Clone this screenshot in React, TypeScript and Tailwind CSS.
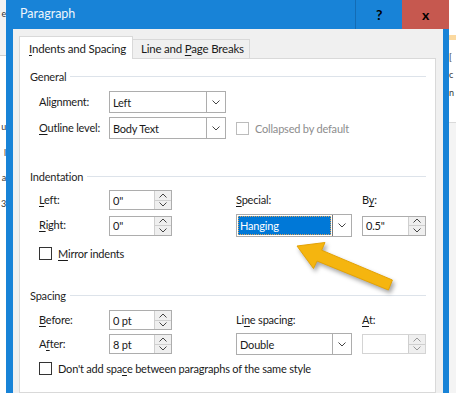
import React from 'react';

const font = "font-['Lato','Liberation_Sans',sans-serif]";

function Chevron({ up = false, className = '' }: { up?: boolean; className?: string }) {
  return (
    <svg width="8" height="5" viewBox="0 0 8 5" className={className}>
      <path
        d={up ? 'M0.5 4.5 L4 1 L7.5 4.5' : 'M0.5 0.5 L4 4 L7.5 0.5'}
        fill="none"
        stroke="#444"
        strokeWidth="1"
      />
    </svg>
  );
}

function Spin({ value, w = 63, disabled = false }: { value: string; w?: number; disabled?: boolean }) {
  return (
    <div
      className={`flex h-[20px] border bg-white ${disabled ? 'border-[#d4d4d4]' : 'border-[#adadad]'}`}
      style={{ width: w }}
    >
      <div className="flex-1 flex items-center pl-[3px] leading-none">{value}</div>
      <div className="w-[17px] flex flex-col border-l border-[#cfcfcf] bg-[#efefef]">
        <div className="flex-1 flex items-center justify-center border-b border-[#cfcfcf]">
          <Chevron up className={disabled ? 'opacity-50' : ''} />
        </div>
        <div className="flex-1 flex items-center justify-center">
          <Chevron className={disabled ? 'opacity-50' : ''} />
        </div>
      </div>
    </div>
  );
}

function Select({ value, w = 116, h = 22, focused = false }: { value: string; w?: number; h?: number; focused?: boolean }) {
  return (
    <div className="flex border border-[#adadad] bg-white" style={{ width: w, height: h }}>
      <div className="flex-1 flex items-center p-[1px]">
        {focused ? (
          <div className="w-full h-full flex items-center pl-[2px] bg-[#0078d7] text-white outline outline-1 outline-dotted outline-[#d9a35a] -outline-offset-1 leading-none">
            {value}
          </div>
        ) : (
          <span className="pl-[2px] leading-none">{value}</span>
        )}
      </div>
      <div
        className={`w-[19px] flex items-center justify-center border-l ${
          focused ? 'border-[#7a7a7a]' : 'border-[#adadad]'
        }`}
      >
        <Chevron />
      </div>
    </div>
  );
}

function Check({ label, disabled = false }: { label: React.ReactNode; disabled?: boolean }) {
  return (
    <div className={`flex items-center h-[13px] ${disabled ? 'text-[#8d8d8d]' : ''}`}>
      <div className={`w-[13px] h-[13px] border bg-white ${disabled ? 'border-[#bcbcbc]' : 'border-[#333]'}`} />
      <span className="ml-[6px] leading-none whitespace-nowrap">{label}</span>
    </div>
  );
}

function GroupHeader({ title, mt }: { title: string; mt: string }) {
  return (
    <div className={`flex items-center h-[16px] ${mt}`}>
      <span className="leading-none text-[#1f1f1f]">{title}</span>
      <div className="flex-1 h-px bg-[#dde3ea] ml-[4px]" />
    </div>
  );
}

const U = ({ children }: { children: React.ReactNode }) => (
  <span className="underline underline-offset-[2px]">{children}</span>
);

export default function App() {
  return (
    <div className={`relative w-[456px] h-[393px] overflow-hidden bg-white flex text-[11px] tracking-[-0.2px] text-[#1a1a1a] ${font}`}>
      {/* page behind, left edge */}
      <div className="w-[6px] flex flex-col overflow-hidden text-[9px] text-[#333]">
        <div className="h-[56px] bg-[#f3f3f3] border-b border-[#d0d0d0] flex justify-end pt-[7px]">
          <span>e</span>
        </div>
        <div className="flex flex-col items-end gap-[12px] pt-[64px]">
          <span>u</span>
          <span>l</span>
          <span>a</span>
          <span>3</span>
        </div>
      </div>

      {/* dialog window */}
      <div className="w-[443px] flex flex-col bg-[#1883d7]">
        <div className="h-[29px] flex items-stretch">
          <div className="flex items-center pl-[14px] text-[#eef5fc] text-[12.5px] tracking-normal">Paragraph</div>
          <div className="ml-auto w-[47px] flex items-center justify-center border-l border-[#136cb5] font-bold text-[14px] text-black">
            ?
          </div>
          <div className="w-[47px] flex items-center justify-center bg-[#c6584f] font-bold text-[14px] text-black">
            x
          </div>
        </div>
        <div className="flex-1 flex">
          <div className="w-[7px]" />
          <div className="w-[430px] bg-[#f0f0f0] pl-[6px] pr-[7px] pt-[7px] flex flex-col">
            {/* tabs */}
            <div className="flex items-end h-[23px] -mb-px relative z-10">
              <div className="w-[114px] h-[23px] bg-white border border-b-0 border-[#d9d9d9] flex items-center pl-[9px] pt-[1px] whitespace-nowrap text-[11.5px]">
                <span><U>I</U>ndents and Spacing</span>
              </div>
              <div className="w-[117px] h-[20px] bg-[#f0f0f0] border border-l-0 border-[#d9d9d9] flex items-center pl-[8px] whitespace-nowrap text-[11.5px]">
                <span>Line and <U>P</U>age Breaks</span>
              </div>
            </div>
            {/* panel */}
            <div className="flex-1 bg-white border border-[#d9d9d9] pl-[10px] pr-[9px]">
              <GroupHeader title="General" mt="mt-[9px]" />
              <div className="pl-[9px]">
                <div className="flex items-center h-[22px] mt-[7px]">
                  <div className="w-[70px]">Alignment:</div>
                  <Select value="Left" w={117} />
                </div>
                <div className="flex items-center h-[22px] mt-[4px]">
                  <div className="w-[70px]"><U>O</U>utline level:</div>
                  <Select value="Body Text" w={117} />
                  <div className="ml-[10px]">
                    <Check label="Collapsed by default" disabled />
                  </div>
                </div>
              </div>

              <GroupHeader title="Indentation" mt="mt-[29px]" />
              <div className="pl-[9px]">
                <div className="flex items-center h-[20px] mt-[6px]">
                  <div className="w-[70px]"><U>L</U>eft:</div>
                  <Spin value={'0"'} />
                  <div className="w-[64px]" />
                  <div className="w-[116px]"><U>S</U>pecial:</div>
                  <div className="w-[10px]" />
                  <div>B<U>y</U>:</div>
                </div>
                <div className="flex items-center h-[23px] mt-[4px]">
                  <div className="w-[70px]"><U>R</U>ight:</div>
                  <Spin value={'0"'} />
                  <div className="w-[64px]" />
                  <Select value="Hanging" w={116} h={23} focused />
                  <div className="w-[10px]" />
                  <Spin value={'0.5"'} w={64} />
                </div>
                <div className="mt-[10px]">
                  <Check label={<><U>M</U>irror indents</>} />
                </div>
              </div>

              <GroupHeader title="Spacing" mt="mt-[27px]" />
              <div className="pl-[9px]">
                <div className="flex items-center h-[20px] mt-[7px]">
                  <div className="w-[70px]"><U>B</U>efore:</div>
                  <Spin value="0 pt" />
                  <div className="w-[64px]" />
                  <div className="w-[116px]">Li<U>n</U>e spacing:</div>
                  <div className="w-[10px]" />
                  <div><U>A</U>t:</div>
                </div>
                <div className="flex items-center h-[22px] mt-[3px]">
                  <div className="w-[70px]">A<U>f</U>ter:</div>
                  <Spin value="8 pt" />
                  <div className="w-[64px]" />
                  <Select value="Double" w={116} />
                  <div className="w-[10px]" />
                  <Spin value="" w={64} disabled />
                </div>
                <div className="mt-[7px]">
                  <Check label={<>Don't add spa<U>c</U>e between paragraphs of the same style</>} />
                </div>
              </div>
            </div>
          </div>
          <div className="w-[6px]" />
        </div>
      </div>

      {/* page behind, right edge */}
      <div className="w-[7px] flex flex-col overflow-hidden text-[9px] text-[#333]">
        <div className="h-[35px]" />
        <div className="h-[5px] bg-[#fbd9a0]" />
        <div className="pt-[8px] leading-[18px]">
          <div>[</div>
          <div>c</div>
          <div>n</div>
        </div>
        <div className="mt-[20px] flex-1 bg-[#f4f4f4] border-t border-[#dadada]" />
      </div>

      {/* callout arrow */}
      <svg
        className="absolute left-0 top-0 pointer-events-none drop-shadow-[2px_3px_2px_rgba(0,0,0,0.35)]"
        width="456"
        height="393"
        viewBox="0 0 456 393"
      >
        <polygon
          points="297,246 325,242.5 321.6,250.2 392.4,280 388.4,290 317,261 313.5,268.5"
          fill="#f5b50f"
          stroke="#e3a206"
          strokeWidth="1"
          strokeLinejoin="round"
        />
      </svg>
    </div>
  );
}
